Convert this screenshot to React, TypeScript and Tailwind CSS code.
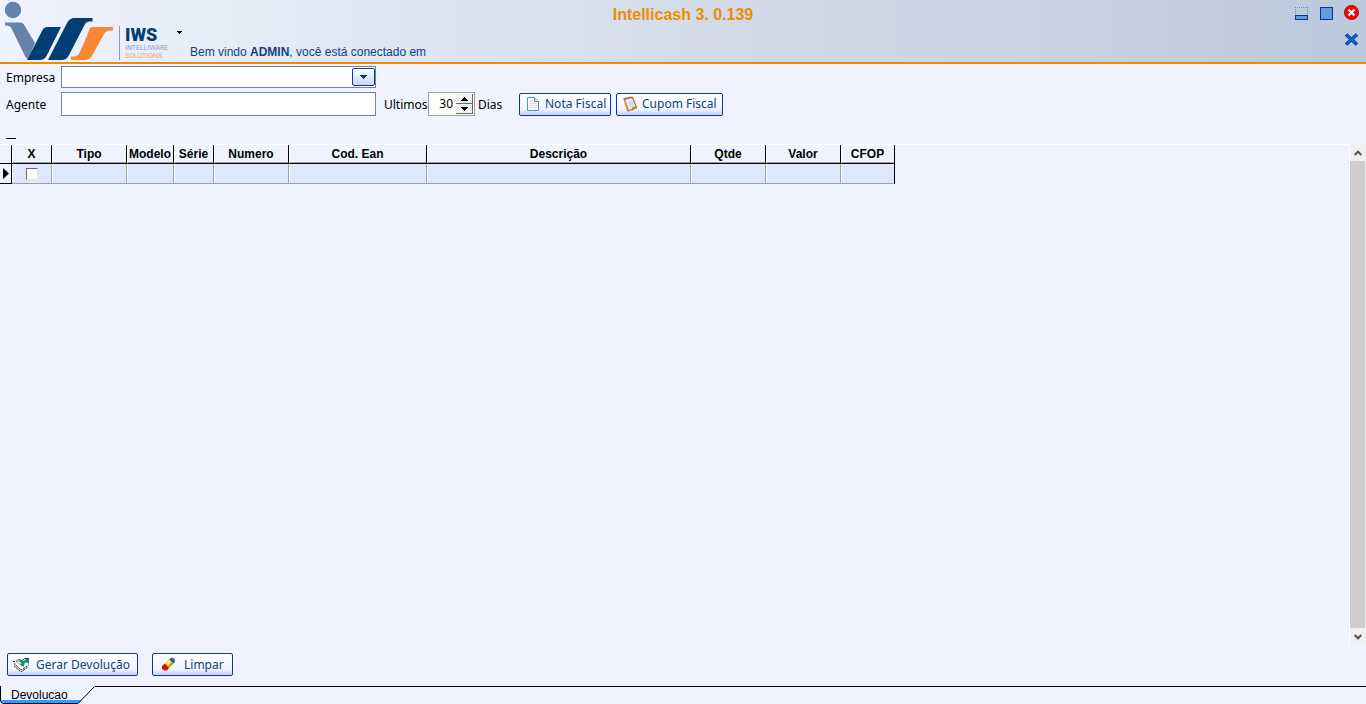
import React, { useState } from 'react';

const columns = [
  { title: 'X', width: 'w-[40px]' },
  { title: 'Tipo', width: 'w-[75px]' },
  { title: 'Modelo', width: 'w-[47px]' },
  { title: 'Série', width: 'w-[40px]' },
  { title: 'Numero', width: 'w-[75px]' },
  { title: 'Cod. Ean', width: 'w-[138px]' },
  { title: 'Descrição', width: 'w-[264px]' },
  { title: 'Qtde', width: 'w-[75px]' },
  { title: 'Valor', width: 'w-[75px]' },
  { title: 'CFOP', width: 'w-[54px]' }
];

const Logo: React.FC = () => (
  <svg width="114" height="61" viewBox="0 0 114 61" role="img" aria-label="IWS">
    <circle cx="13" cy="10" r="8.2" fill="#6583a8" />
    <path d="M5 22.500H20C22 22.500 23.500 23.500 24.500 25.500L35 43L28 59C26 58 25 56.500 24 54L12 29.500C11 26.500 9 25.500 5 25.500Z" fill="#6583a8" />
    <path d="M47 27H61L47 55C45 59 43 60 39 60H27L42 31C43.500 28 45 27 47 27Z" fill="#003e73" />
    <path d="M75 18H92.500V21.500H90C86.500 21.500 85 23.500 83.500 27L69 55C67 59 65 60 61 60H48L67 23C69 19.500 71 18 75 18Z" fill="#003e73" />
    <path d="M92 27H113V30.500H110C106.500 30.500 105 32 103.500 35L93 54C90.500 58.500 88 60 84 60H71V56.500H73C77 56.500 78.500 55 80 52L89 31C90 28 90.500 27 92 27Z" fill="#f78733" />
  </svg>
);

const PageIcon: React.FC = () => (
  <svg width="12" height="14" viewBox="0 0 12 14" aria-hidden="true">
    <path d="M.5 .5H7.500L11.500 4.500V13.500H.5Z" fill="#fafcff" stroke="#4f93cf" />
    <path d="M7.500 .5V4.500H11.500" fill="#cfe3f5" stroke="#4f93cf" />
    <path d="M2 4.500H6M2 6.500H10M2 8.500H10M2 10.500H10" stroke="#d9dfe6" />
  </svg>
);

const ReceiptIcon: React.FC = () => (
  <svg width="15" height="16" viewBox="0 0 15 16" aria-hidden="true">
    <path d="M1 3L9.500 1.500L13.500 11.500L5 15Z" fill="#eaf3fc" stroke="#b8690f" strokeWidth="1.200" />
    <path d="M1.500 3.500L5.500 14" stroke="#e0993a" strokeWidth="1.500" />
    <path d="M13.500 11.500L9.500 14L10 11Z" fill="#f2c27c" stroke="#b8690f" />
    <path d="M5 6L9 4L11 9L7 11.500Z" fill="#c5dcf4" />
    <path d="M2 1.500V4M4 1V3.500M6 .5V3M8 .5V2.500" stroke="#76532b" strokeWidth=".8" />
  </svg>
);

const ReturnIcon: React.FC = () => (
  <svg width="17" height="16" viewBox="0 0 17 16" aria-hidden="true">
    <path d="M1 6L6 3L15.500 9L8.500 15L1 9Z" fill="#d5d5d5" />
    <path d="M3 6.500L8.500 11.500L14 8" fill="none" stroke="#fff" strokeWidth="2" />
    <path d="M0 4.500H3L5 3M1 6.500L8 13L16 8M1 9L8 15L15 10" fill="none" stroke="#333" strokeDasharray="2 1" />
    <path d="M6 4L8 3.500L11 4L13 2H16V7L14 5.500C11.500 5 10.500 7 11 10L7 7.500L9 6Z" fill="#17857c" />
    <path d="M5 2.500L9 3.500L12 1.500H16" fill="none" stroke="#164c4b" />
  </svg>
);

const EraserIcon: React.FC = () => (
  <svg width="15" height="15" viewBox="0 0 15 15" aria-hidden="true">
    <path d="M9 1.500L11 .5L13.500 2L14 5L12.500 6.500L8 3Z" fill="#2458b8" />
    <path d="M8 2.500L12.500 6.500L8 11L4 6.500Z" fill="#f4dc16" />
    <path d="M11 5L12.500 6.500L8 11L6.500 9.500Z" fill="#b3a11a" />
    <path d="M4 6.500L8 11L6 13.500H3L1 11.500V9Z" fill="#d31317" />
    <path d="M9 4L6.500 7" stroke="#fff9b0" strokeWidth="1.500" />
  </svg>
);

interface ActionButtonProps {
  icon: React.ReactNode;
  className: string;
  children: React.ReactNode;
}

const ActionButton: React.FC<ActionButtonProps> = ({ icon, className, children }) => (
  <button
    type="button"
    className={`flex h-[23px] items-center rounded-xs border border-[#0f369f] bg-gradient-to-b from-white via-[#eff3ff] via-75% to-[#c3cffa] whitespace-nowrap text-[#12427c] ${className}`}
  >
    {icon}
    {children}
  </button>
);

const App: React.FC = () => {
  const [days, setDays] = useState(30);
  const [checked, setChecked] = useState(false);

  return (
    <div className="flex min-h-screen flex-col bg-[#eff3ff] font-['Noto_Sans',sans-serif] text-[12px] leading-4 text-black">
      {/* Header */}
      <header className="grid h-16 grid-cols-3 border-b-2 border-[#ee8c00] bg-gradient-to-r from-[#eff3ff] via-[#d4dcea] to-[#bcc9dc] font-['Liberation_Sans',sans-serif]">
        <div className="flex whitespace-nowrap">
          <Logo />
          <div className="mt-[26px] ml-[5px] h-[34px] w-[50px] border-l border-[#8b9dbb] pl-[5px] font-['Roboto',sans-serif]">
            <div className="text-[18px] leading-[18px] font-black text-[#003e73]">IWS</div>
            <div className="text-[7px] leading-2 text-[#8ea1bd]">INTELLIWARE</div>
            <div className="text-[7px] leading-2 text-[#f0a276]">SOLUTIONS</div>
          </div>
          <button type="button" aria-label="Menu" className="ml-2 flex h-16 w-[5px] items-center">
            <svg width="5" height="3" viewBox="0 0 5 3">
              <path d="M0 0H5V1H4V2H3V3H2V2H1V1H0Z" fill="#000" />
            </svg>
          </button>
          <p className="mt-11 ml-2 text-[#12427c]">
            Bem vindo <b>ADMIN</b>, você está conectado em
          </p>
        </div>
        <h1 className="mt-[5px] text-center text-[16px] leading-5 font-bold text-[#ee8c00]">Intellicash 3. 0.139</h1>
        <div className="flex flex-col items-end gap-3 pt-[5px] pr-[7px]">
          <div className="flex items-center gap-3">
            <button type="button" aria-label="Minimizar">
              <svg width="13" height="13" viewBox="0 0 13 13" className="block">
                <path d="M0 .5H13M.5 0V8M12.500 0V8" stroke="#4f93cf" strokeDasharray="1 1" />
                <rect x=".5" y="8.500" width="12" height="4" fill="#659dd3" stroke="#0732a2" />
              </svg>
            </button>
            <button type="button" aria-label="Restaurar">
              <svg width="13" height="13" viewBox="0 0 13 13" className="block">
                <rect x=".5" y=".5" width="12" height="12" fill="#659dd3" stroke="#0732a2" />
              </svg>
            </button>
            <button type="button" aria-label="Fechar" className="-ml-[2px]">
              <svg width="16" height="16" viewBox="0 0 16 16" className="block">
                <circle cx="8.500" cy="7.500" r="7" fill="#f00" stroke="#a50808" />
                <path d="M5.500 4.500L11.500 10.500M11.500 4.500L5.500 10.500" stroke="#fff" strokeWidth="2.200" />
              </svg>
            </button>
          </div>
          <button type="button" aria-label="Fechar aba">
            <svg width="15" height="13" viewBox="0 0 15 13" className="block">
              <path d="M2 1.500L13 11.500M13 1.500L2 11.500" stroke="#0732a2" strokeWidth="3.600" />
              <path d="M2.500 2L12.500 11M12.500 2L2.500 11" stroke="#0b67d0" strokeWidth="2" />
            </svg>
          </button>
        </div>
      </header>

      {/* Filters */}
      <div className="flex flex-col gap-1 pt-[2px] pl-[6px]">
        <div className="flex items-center">
          <label htmlFor="empresa" className="w-[55px] pt-[2px]">Empresa</label>
          <div className="relative">
            <select id="empresa" className="block h-[22px] w-[315px] appearance-none border border-[#6d83aa] bg-white px-1 outline-none">
              <option></option>
            </select>
            <span className="pointer-events-none absolute top-[2px] right-px flex h-[18px] w-[23px] items-center justify-center rounded-xs border border-[#0f369f] bg-gradient-to-b from-white to-[#cbd5fa]">
              <svg width="7" height="4" viewBox="0 0 7 4">
                <path d="M0 0H7V1H6V2H5V3H4V4H3V3H2V2H1V1H0Z" fill="#003e73" />
              </svg>
            </span>
          </div>
        </div>
        <div className="flex items-center">
          <label htmlFor="agente" className="w-[55px] pt-[2px]">Agente</label>
          <input id="agente" type="text" className="h-6 w-[315px] border border-[#6d83aa] bg-white px-1 outline-none" />
          <label htmlFor="dias" className="ml-2 w-11 pt-[2px]">Ultimos</label>
          <div className="flex h-6 w-[47px] border border-[#a0a0a0] bg-white p-px">
            <input
              id="dias"
              type="number"
              value={days}
              onChange={(e) => setDays(Number(e.target.value))}
              className="w-[26px] appearance-none bg-white pr-[3px] text-right outline-none [-moz-appearance:textfield] [&::-webkit-inner-spin-button]:appearance-none"
            />
            <div className="flex flex-1 flex-col">
              <button type="button" aria-label="Aumentar" onClick={() => setDays(days + 1)} className="flex flex-1 items-center justify-center border-r border-b border-[#696969] bg-[#f0f0f0]">
                <svg width="7" height="4" viewBox="0 0 7 4">
                  <path d="M3 0H4V1H5V2H6V3H7V4H0V3H1V2H2V1H3Z" fill="#000" />
                </svg>
              </button>
              <button type="button" aria-label="Diminuir" onClick={() => setDays(days - 1)} className="flex flex-1 items-center justify-center border-r border-b border-[#696969] bg-[#f0f0f0]">
                <svg width="7" height="4" viewBox="0 0 7 4">
                  <path d="M0 0H7V1H6V2H5V3H4V4H3V3H2V2H1V1H0Z" fill="#000" />
                </svg>
              </button>
            </div>
          </div>
          <span className="ml-[3px] w-[41px] pt-[2px]">Dias</span>
          <ActionButton icon={<PageIcon />} className="w-[92px] gap-[6px] pl-[7px]">Nota Fiscal</ActionButton>
          <ActionButton icon={<ReceiptIcon />} className="ml-[5px] w-[107px] gap-1 pl-[6px]">Cupom Fiscal</ActionButton>
        </div>
      </div>
      <div className="mt-[22px] mb-[5px] ml-[6px] h-px w-[10px] bg-black" />

      {/* Grid */}
      <main className="flex flex-1">
        <div className="flex-1 overflow-hidden border-t border-r border-white">
          <table className="w-[895px] table-fixed border-separate border-spacing-0 font-['Liberation_Sans',sans-serif]">
            <thead>
              <tr className="h-[19px]">
                <th aria-label="Registro" className="w-[12px] border-r border-b border-black p-0" />
                {columns.map((column) => (
                  <th key={column.title} className={`border-r border-b border-black p-0 font-bold shadow-[inset_1px_0_0_#fff,inset_0_-1px_0_#a0a0a0] ${column.width}`}>
                    {column.title}
                  </th>
                ))}
              </tr>
            </thead>
            <tbody>
              <tr className="h-5 bg-[#dfe7fc]">
                <td className="border-r border-b border-black bg-[#eff3ff] p-0">
                  <svg width="7" height="11" viewBox="0 0 7 11" className="ml-[3px] block">
                    <path d="M0 0L6 5.500L0 11Z" fill="#000" />
                  </svg>
                </td>
                {columns.map((column) => (
                  <td key={column.title} className="border-r border-b border-[#a0a0a0] p-0 shadow-[inset_1px_0_0_#fff] last:border-r-black">
                    {column.title === 'X' && (
                      <input
                        type="checkbox"
                        aria-label="Selecionar item"
                        checked={checked}
                        onChange={(e) => setChecked(e.target.checked)}
                        className="mx-auto block size-3 appearance-none border border-t-[#696969] border-r-[#e3e3e3] border-b-[#e3e3e3] border-l-[#696969] bg-white checked:bg-[#12427c]"
                      />
                    )}
                  </td>
                ))}
              </tr>
            </tbody>
          </table>
        </div>
        <div className="flex w-4 flex-col bg-[#f0f0f0]">
          <button type="button" aria-label="Rolar para cima" className="flex h-[17px] items-center justify-center">
            <svg width="8" height="6" viewBox="0 0 8 6">
              <path d="M.7 5L4 1.700L7.300 5" fill="none" stroke="#505050" strokeWidth="2" />
            </svg>
          </button>
          <div className="mr-px flex-1 bg-[#cdcdcd]" />
          <button type="button" aria-label="Rolar para baixo" className="flex h-[17px] items-center justify-center">
            <svg width="8" height="6" viewBox="0 0 8 6">
              <path d="M.7 1L4 4.300L7.300 1" fill="none" stroke="#505050" strokeWidth="2" />
            </svg>
          </button>
        </div>
      </main>

      {/* Actions */}
      <div className="flex gap-[14px] pt-2 pb-[10px] pl-[7px]">
        <ActionButton icon={<ReturnIcon />} className="w-[131px] gap-[6px] pl-[5px]">Gerar Devolução</ActionButton>
        <ActionButton icon={<EraserIcon />} className="w-[81px] gap-2 pl-2">Limpar</ActionButton>
      </div>

      {/* Tabs */}
      <nav className="flex h-[18px]">
        <a href="#devolucao" className="relative block h-[18px] w-[95px]">
          <svg width="95" height="18" viewBox="0 0 95 18" className="absolute inset-0" aria-hidden="true">
            <path d="M1 14H82L79 17H1Z" fill="#3399ff" />
            <path d="M.5 0V15.500L2.500 17.500H78L94.500 .5" fill="none" stroke="#000" />
          </svg>
          <span className="relative block pt-px pl-[11px] font-['Liberation_Sans',sans-serif]">Devolucao</span>
        </a>
        <div className="flex-1 border-t border-black" />
      </nav>
    </div>
  );
};

export default App;
